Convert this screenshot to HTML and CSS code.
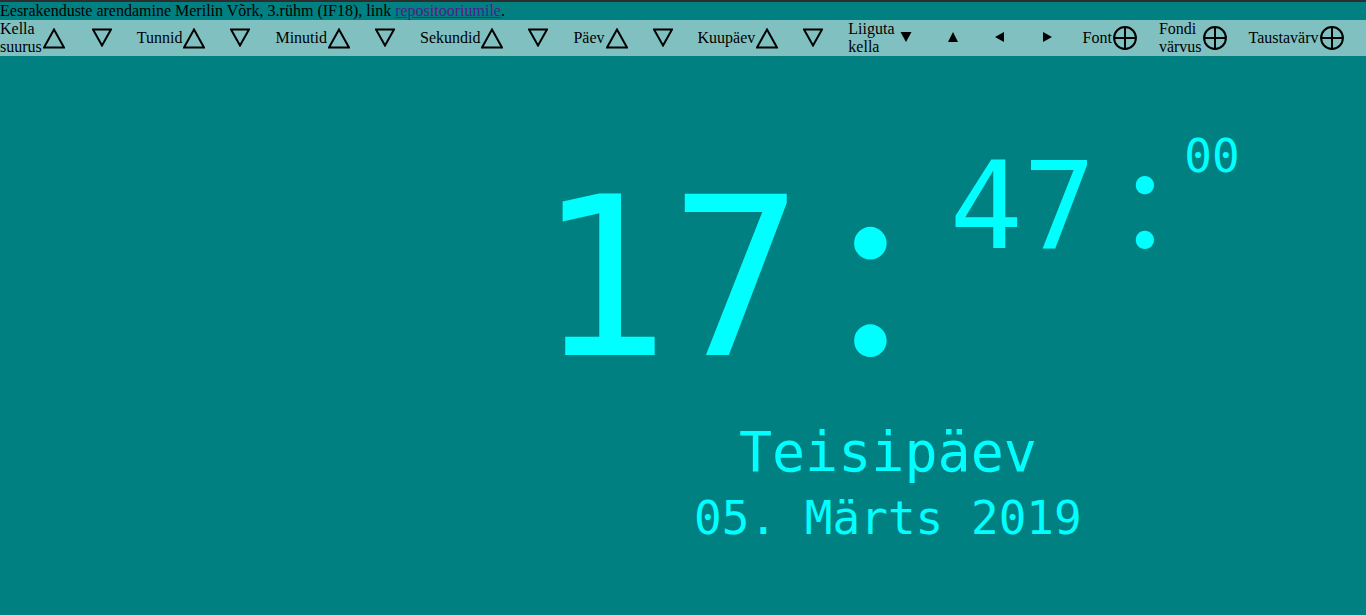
FILE: index.html
```html
<!DOCTYPE html>
<html lang="et">
<head>
<meta charset="utf-8">
<title>Kell</title>
<link rel="stylesheet" href="styles.css">
</head>
<body>
<div class="topline"></div>
<header class="info">Eesrakenduste arendamine Merilin Võrk, 3.rühm (IF18), link <a class="repo" href="#">repositooriumile</a>.</header>
<nav class="toolbar">
  <div class="tool tool-first"><span class="lbl">Kella<br>suurus</span><svg class="ico tri" viewBox="0 0 22 21"><polygon points="11,1.5 21,19.5 1,19.5"/></svg></div>
  <div class="tool"><svg class="ico tri-d" viewBox="0 0 20 19"><polygon points="1,1.5 19,1.5 10,17.5"/></svg></div>
  <div class="tool"><span class="lbl">Tunnid</span><svg class="ico tri" viewBox="0 0 22 21"><polygon points="11,1.5 21,19.5 1,19.5"/></svg></div>
  <div class="tool"><svg class="ico tri-d" viewBox="0 0 20 19"><polygon points="1,1.5 19,1.5 10,17.5"/></svg></div>
  <div class="tool"><span class="lbl">Minutid</span><svg class="ico tri" viewBox="0 0 22 21"><polygon points="11,1.5 21,19.5 1,19.5"/></svg></div>
  <div class="tool"><svg class="ico tri-d" viewBox="0 0 20 19"><polygon points="1,1.5 19,1.5 10,17.5"/></svg></div>
  <div class="tool"><span class="lbl">Sekundid</span><svg class="ico tri" viewBox="0 0 22 21"><polygon points="11,1.5 21,19.5 1,19.5"/></svg></div>
  <div class="tool"><svg class="ico tri-d" viewBox="0 0 20 19"><polygon points="1,1.5 19,1.5 10,17.5"/></svg></div>
  <div class="tool"><span class="lbl">Päev</span><svg class="ico tri" viewBox="0 0 22 21"><polygon points="11,1.5 21,19.5 1,19.5"/></svg></div>
  <div class="tool"><svg class="ico tri-d" viewBox="0 0 20 19"><polygon points="1,1.5 19,1.5 10,17.5"/></svg></div>
  <div class="tool"><span class="lbl">Kuupäev</span><svg class="ico tri" viewBox="0 0 22 21"><polygon points="11,1.5 21,19.5 1,19.5"/></svg></div>
  <div class="tool"><svg class="ico tri-d" viewBox="0 0 20 19"><polygon points="1,1.5 19,1.5 10,17.5"/></svg></div>
  <div class="tool"><span class="lbl">Liiguta<br>kella</span><svg class="ico small" viewBox="0 0 22 12"><polygon points="5.5,1 16.5,1 11,11"/></svg></div>
  <div class="tool"><svg class="ico small" viewBox="0 0 22 12"><polygon points="6,11 16,11 11,1"/></svg></div>
  <div class="tool"><svg class="ico small" viewBox="0 0 22 12"><polygon points="15,1 15,11 6,6"/></svg></div>
  <div class="tool"><svg class="ico small" viewBox="0 0 22 12"><polygon points="7,1 7,11 16,6"/></svg></div>
  <div class="tool tool-plus"><span class="lbl">Font</span><svg class="ico plus" viewBox="0 0 24 24"><circle cx="12" cy="12" r="10.9"/><line x1="12" y1="1.1" x2="12" y2="22.9"/><line x1="1.1" y1="12" x2="22.9" y2="12"/></svg></div>
  <div class="tool tool-plus"><span class="lbl">Fondi<br>värvus</span><svg class="ico plus" viewBox="0 0 24 24"><circle cx="12" cy="12" r="10.9"/><line x1="12" y1="1.1" x2="12" y2="22.9"/><line x1="1.1" y1="12" x2="22.9" y2="12"/></svg></div>
  <div class="tool tool-plus"><span class="lbl">Taustavärv</span><svg class="ico plus" viewBox="0 0 24 24"><circle cx="12" cy="12" r="10.9"/><line x1="12" y1="1.1" x2="12" y2="22.9"/><line x1="1.1" y1="12" x2="22.9" y2="12"/></svg></div>
</nav>
<main class="stage">
  <div class="clock">
    <span class="hours">17<span class="colon colon-h">:</span></span><span class="minutes">47<span class="colon colon-m">:</span></span><span class="seconds">00</span>
  </div>
  <div class="weekday">Teisipäev</div>
  <div class="date">05. Märts 2019</div>
</main>
</body>
</html>
```
FILE: styles.css
```css
html, body {
  margin: 0;
  padding: 0;
}
body {
  background: #008080;
  font-family: "Liberation Serif", "Times New Roman", serif;
  font-size: 16px;
  color: #000;
  min-height: 615px;
}
.topline {
  height: 2px;
  background: #2e2e2e;
}
.info {
  height: 18px;
  line-height: 18px;
  white-space: nowrap;
}
.repo {
  color: #551a8b;
  text-decoration: underline;
}
.toolbar {
  height: 36px;
  background: #80c0c0;
  display: flex;
  align-items: center;
  gap: 25px;
  white-space: nowrap;
}
.tool {
  display: flex;
  align-items: center;
}
.tool-first {
  margin-right: 2px;
}
.tool-plus {
  margin-right: -3px;
}
.lbl {
  line-height: 18px;
}
.ico {
  display: block;
  flex: none;
}
.tri {
  width: 22px;
  height: 21px;
  margin-left: 1px;
  fill: none;
  stroke: #000;
  stroke-width: 2;
}
.tri-d {
  width: 20px;
  height: 19px;
  margin-top: -2px;
  fill: none;
  stroke: #000;
  stroke-width: 2;
}
.small {
  width: 22px;
  height: 12px;
  margin-top: -2px;
  fill: #000;
}
.plus {
  width: 24px;
  height: 24px;
  margin-left: 1px;
  fill: none;
  stroke: #000;
  stroke-width: 2;
}
.stage {
  margin-left: 30%;
  display: flex;
  flex-direction: column;
  align-items: center;
  color: #00ffff;
  font-family: "DejaVu Sans Mono", "Liberation Mono", monospace;
}
.clock {
  display: flex;
  align-items: flex-start;
  margin-top: 77px;
}
.clock > span {
  line-height: 1;
  display: block;
}
.colon {
  display: inline-block;
  font-family: Lato, "DejaVu Sans", sans-serif;
  text-align: center;
  line-height: 0;
}
.colon-h {
  width: 134px;
  font-size: 260px;
}
.colon-m {
  width: 73px;
  font-size: 145px;
  padding-left: 12px;
}
.hours {
  font-size: 222px;
  margin-top: 34px;
}
.minutes {
  font-size: 122px;
  margin-top: 12px;
  margin-left: 12px;
}
.seconds {
  font-size: 46px;
  margin-left: 3px;
}
.weekday {
  font-size: 55px;
  line-height: 1;
  margin-top: 36px;
}
.date {
  font-size: 46px;
  line-height: 1;
  margin-top: 15px;
}
```
